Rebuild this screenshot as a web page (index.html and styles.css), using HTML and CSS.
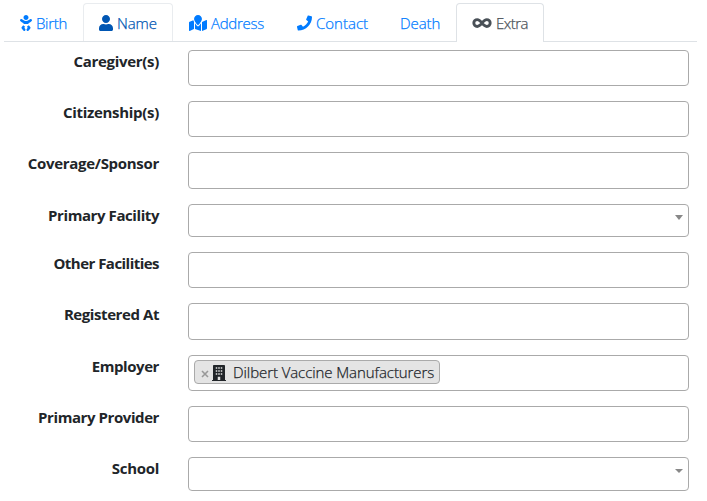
FILE: index.html
```html
<!DOCTYPE html>
<html lang="en">
<head>
<meta charset="utf-8">
<title>Extra</title>
<link rel="stylesheet" href="styles.css">
</head>
<body>
<nav class="tabs">
  <a class="tab birth"><svg class="icon" viewBox="0 0 384 512"><path d="M192 160c44.2 0 80-35.8 80-80S236.2 0 192 0s-80 35.8-80 80 35.8 80 80 80zm-53.4 248.8l25.6-32-61.5-51.2L56.8 383c-11.4 14.2-11.7 34.4-.8 49l48 64c7.9 10.5 19.9 16 32 16 8.3 0 16.8-2.6 24-8 17.7-13.2 21.2-38.3 8-56l-29.4-39.2zm142.7-83.2l-61.5 51.2 25.6 32L216 448c-13.2 17.7-9.7 42.8 8 56 7.2 5.4 15.6 8 24 8 12.2 0 24.2-5.5 32-16l48-64c10.9-14.6 10.6-34.8-.8-49l-45.9-57.4zM376.7 145c-12.7-18.1-37.6-22.4-55.7-9.8l-40.6 28.5c-52.7 37-124.2 37-176.8 0L63 135.3C44.9 122.6 20 127 7.3 145-5.4 163.1-1 188 17 200.7l40.6 28.5c17 11.9 35.4 20.9 54.4 27.9V288h160v-30.8c19-7 37.4-16 54.4-27.9l40.6-28.5c18.1-12.8 22.4-37.7 9.7-55.8z"/></svg><span>Birth</span></a>
  <a class="tab name"><svg class="icon" viewBox="0 0 448 512"><path d="M224 256c70.7 0 128-57.3 128-128S294.7 0 224 0 96 57.3 96 128s57.3 128 128 128zm89.6 32h-16.7c-22.2 10.2-46.9 16-72.9 16s-50.6-5.8-72.9-16h-16.7C60.2 288 0 348.2 0 422.4V464c0 26.5 21.5 48 48 48h352c26.5 0 48-21.5 48-48v-41.6c0-74.2-60.2-134.4-134.4-134.4z"/></svg><span>Name</span></a>
  <a class="tab address"><svg class="icon" viewBox="0 0 576 512"><path d="M288 0c-69.59 0-126 56.41-126 126 0 56.26 82.35 158.8 113.9 196.02 6.39 7.54 17.82 7.54 24.2 0C331.65 284.8 414 182.26 414 126 414 56.41 357.59 0 288 0zM20.12 215.95A32.006 32.006 0 0 0 0 245.66v250.32c0 11.32 11.43 19.06 21.94 14.86L160 448V214.92c-8.84-15.98-16.07-31.54-21.25-46.42L20.12 215.95zM288 359.67c-14.07 0-27.38-6.18-36.51-16.96-19.66-23.2-40.57-49.62-59.49-76.72v182l192 64V266c-18.92 27.09-39.82 53.52-59.49 76.72-9.13 10.77-22.44 16.95-36.51 16.95zm266.06-198.51L416 224v288l139.88-55.95A31.996 31.996 0 0 0 576 426.34V176.02c0-11.32-11.43-19.06-21.94-14.86z"/></svg><span>Address</span></a>
  <a class="tab contact"><svg class="icon" viewBox="0 0 512 512"><path d="M493.4 24.6l-104-24c-11.3-2.6-22.9 3.3-27.5 13.9l-48 112c-4.2 9.8-1.4 21.3 6.9 28l60.6 49.6c-36 76.7-98.9 140.5-177.2 177.2l-49.6-60.6c-6.8-8.3-18.2-11.1-28-6.9l-112 48C3.9 366.5-2 378.1.6 389.4l24 104C27.1 504.2 36.7 512 48 512c256.1 0 464-207.5 464-464 0-11.2-7.7-20.9-18.6-23.4z"/></svg><span>Contact</span></a>
  <a class="tab death"><span>Death</span></a>
  <a class="tab extra"><svg class="icon" viewBox="0 0 640 512"><path class="loop" d="M320 256C270 190 230 146 168 146a110 110 0 0 0 0 220C230 366 270 322 320 256S410 146 472 146a110 110 0 0 1 0 220C410 366 370 322 320 256z"/></svg><span>Extra</span></a>
</nav>
<main class="form">
  <div class="row"><label>Caregiver(s)</label><div class="field"></div></div>
  <div class="row"><label>Citizenship(s)</label><div class="field"></div></div>
  <div class="row"><label>Coverage/Sponsor</label><div class="field tall"></div></div>
  <div class="row"><label class="snug">Primary Facility</label><div class="field select"><i class="arrow"></i></div></div>
  <div class="row"><label class="tight">Other Facilities</label><div class="field"></div></div>
  <div class="row"><label class="snug">Registered At</label><div class="field tall"></div></div>
  <div class="row"><label class="snug">Employer</label><div class="field"><div class="chip"><svg class="remove" viewBox="0 0 8 8"><path d="M1 1l6 6M7 1L1 7"/></svg><svg class="building" viewBox="0 0 448 512"><path fill-rule="evenodd" d="M436 480h-20V24c0-13-11-24-24-24H56C43 0 32 11 32 24v456H12c-7 0-12 5-12 12v20h448v-20c0-7-5-12-12-12zM120 70h48v48h-48zM200 70h48v48h-48zM280 70h48v48h-48zM120 166h48v48h-48zM200 166h48v48h-48zM280 166h48v48h-48zM120 262h48v48h-48zM200 262h48v48h-48zM280 262h48v48h-48zM184 376h80v104h-80z"/></svg><span>Dilbert Vaccine Manufacturers</span></div></div></div>
  <div class="row"><label class="snug">Primary Provider</label><div class="field"></div></div>
  <div class="row"><label>School</label><div class="field select last"><i class="arrow"></i></div></div>
</main>
</body>
</html>
```
FILE: styles.css
```css
* { box-sizing: border-box; }
body {
  margin: 0;
  padding: 3px 10px 0 4px;
  background: #fff;
  color: #212529;
  font: 300 15px/24px "Open Sans", "Noto Sans", sans-serif;
  overflow: hidden;
}
.tabs {
  display: flex;
  height: 39px;
  border-bottom: 1px solid #dee2e6;
}
.tab {
  display: flex;
  align-items: flex-start;
  flex: none;
  height: 39px;
  padding: 7px 0 0 15px;
  border: 1px solid transparent;
  border-bottom: 0;
  border-radius: 4px 4px 0 0;
  color: #007bff;
  white-space: nowrap;
}
.tab span, .chip span { -webkit-text-stroke: 0.25px currentColor; }
.tab span { letter-spacing: -0.3px; }
.icon { flex: none; height: 16px; margin-top: 4px; fill: currentColor; }
.birth { width: 79px; }
.birth .icon { width: 12px; margin-right: 4px; }
.name { width: 90px; color: #0056b3; border-color: #e9ecef #e9ecef #dee2e6; height: 38px; }
.name .icon { width: 14px; margin-right: 4px; }
.name span, .death span { letter-spacing: -0.1px; }
.address { width: 108px; }
.address .icon { width: 18px; margin-right: 4px; }
.contact { width: 103px; }
.contact .icon { width: 15px; margin-right: 4px; }
.contact span { letter-spacing: 0; }
.death { width: 72px; }
.extra { width: 88px; color: #495057; background: #fff; border-color: #dee2e6; }
.extra .icon { width: 20px; margin-right: 4px; }
.extra span { letter-spacing: -0.5px; }
.loop { fill: none; stroke: currentColor; stroke-width: 92; }
.form {
  display: grid;
  grid-template-rows: 51px 51px 52px 48px 51px 52px 51px 51px 34px;
  padding-top: 8px;
}
.row { display: grid; grid-template-columns: 155px 501px; column-gap: 29px; align-items: start; }
label { margin-top: -1px; text-align: right; font-weight: 700; letter-spacing: -0.3px; white-space: nowrap; }
.snug { letter-spacing: -0.42px; }
.tight { letter-spacing: -0.53px; }
.field {
  display: flex;
  height: 36px;
  padding: 4px 5px;
  border: 1px solid #aaa;
  border-radius: 4px;
}
.tall { height: 37px; }
.select { height: 33px; justify-content: flex-end; padding: 10px 5px 0 0; }
.last { height: 34px; padding-top: 11px; }
.arrow { width: 0; height: 0; border: 4px solid transparent; border-top: 5px solid #888; border-bottom: 0; }
.last .arrow { border-top-width: 4px; }
.chip {
  display: flex;
  width: 246px;
  height: 24px;
  padding-left: 6px;
  border: 1px solid #aaa;
  border-radius: 4px;
  background: #e4e4e4;
  line-height: 23px;
  letter-spacing: -0.08px;
  white-space: nowrap;
}
.remove { flex: none; width: 8px; height: 8px; margin: 9px 3px 0 0; fill: none; stroke: #999; stroke-width: 1.6; }
.building { flex: none; width: 14px; height: 16px; margin: 4px 7px 0 0; fill: #212529; }
```
